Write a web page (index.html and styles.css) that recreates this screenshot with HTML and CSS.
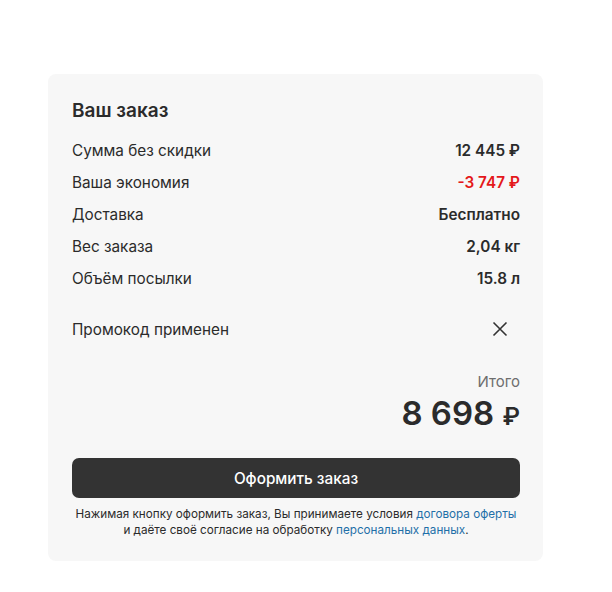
FILE: index.html
```html
<!DOCTYPE html>
<html lang="ru">
<head>
<meta charset="utf-8">
<link rel="stylesheet" href="styles.css">
</head>
<body>
<div class="card">
  <h2 class="title">Ваш заказ</h2>
  <div class="rows">
    <div class="row"><span>Сумма без скидки</span><b>12 445 ₽</b></div>
    <div class="row"><span>Ваша экономия</span><b class="red">-3 747 ₽</b></div>
    <div class="row"><span>Доставка</span><b>Бесплатно</b></div>
    <div class="row"><span>Вес заказа</span><b>2,04 кг</b></div>
    <div class="row"><span>Объём посылки</span><b>15.8 л</b></div>
  </div>
  <div class="promo">
    <span>Промокод применен</span>
    <svg class="close" width="16" height="16" viewBox="0 0 16 16"><path d="M1.5 1.5L14.5 14.5M14.5 1.5L1.5 14.5" stroke="#333" stroke-width="1.6" fill="none"/></svg>
  </div>
  <div class="total">
    <div class="total-label">Итого</div>
    <div class="total-value">8 698 <span class="rub">₽</span></div>
  </div>
  <button class="btn">Оформить заказ</button>
  <p class="note">Нажимая кнопку оформить заказ, Вы принимаете условия <a href="#">договора оферты</a><br>и даёте своё согласие на обработку <a href="#">персональных данных</a>.</p>
</div>
</body>
</html>
```
FILE: styles.css
```css
* { box-sizing: border-box; }
body {
  margin: 0;
  background: #fff;
  font-family: Inter, "Noto Sans", sans-serif;
  color: #2b2b2b;
}
.card {
  margin: 74px 0 0 48px;
  width: 495px;
  background: #f7f7f7;
  border-radius: 8px;
  padding: 25px 23px 23px 24px;
}
.title {
  margin: 0;
  font-size: 19px;
  font-weight: 600;
  line-height: 24px;
}
.rows {
  margin-top: 11px;
  display: flex;
  flex-direction: column;
}
.row {
  display: flex;
  justify-content: space-between;
  align-items: center;
  height: 32px;
  font-size: 15.3px;
}
.row b { font-weight: 600; }
.red { color: #e4181a; }
.promo {
  display: flex;
  justify-content: space-between;
  align-items: center;
  margin-top: 19px;
  height: 32px;
  font-size: 15.3px;
}
.close { margin-right: 12px; }
.total {
  margin-top: 27px;
  text-align: right;
}
.total-label {
  font-size: 15px;
  color: #6e6e6e;
  line-height: 20px;
}
.total-value {
  font-size: 33px;
  font-weight: 600;
  line-height: 40px;
  margin-top: 1px;
}
.rub { font-size: 24px; }
.btn {
  display: block;
  margin-top: 21px;
  width: 448px;
  height: 40px;
  border: 0;
  border-radius: 7px;
  background: #333;
  color: #fff;
  font-family: inherit;
  font-size: 15.3px;
  font-weight: 500;
}
.note {
  margin: 8px 0 0;
  text-align: center;
  font-size: 11.7px;
  line-height: 16px;
  color: #2b2b2b;
}
.note a { color: #1f6fa8; text-decoration: none; }
```
